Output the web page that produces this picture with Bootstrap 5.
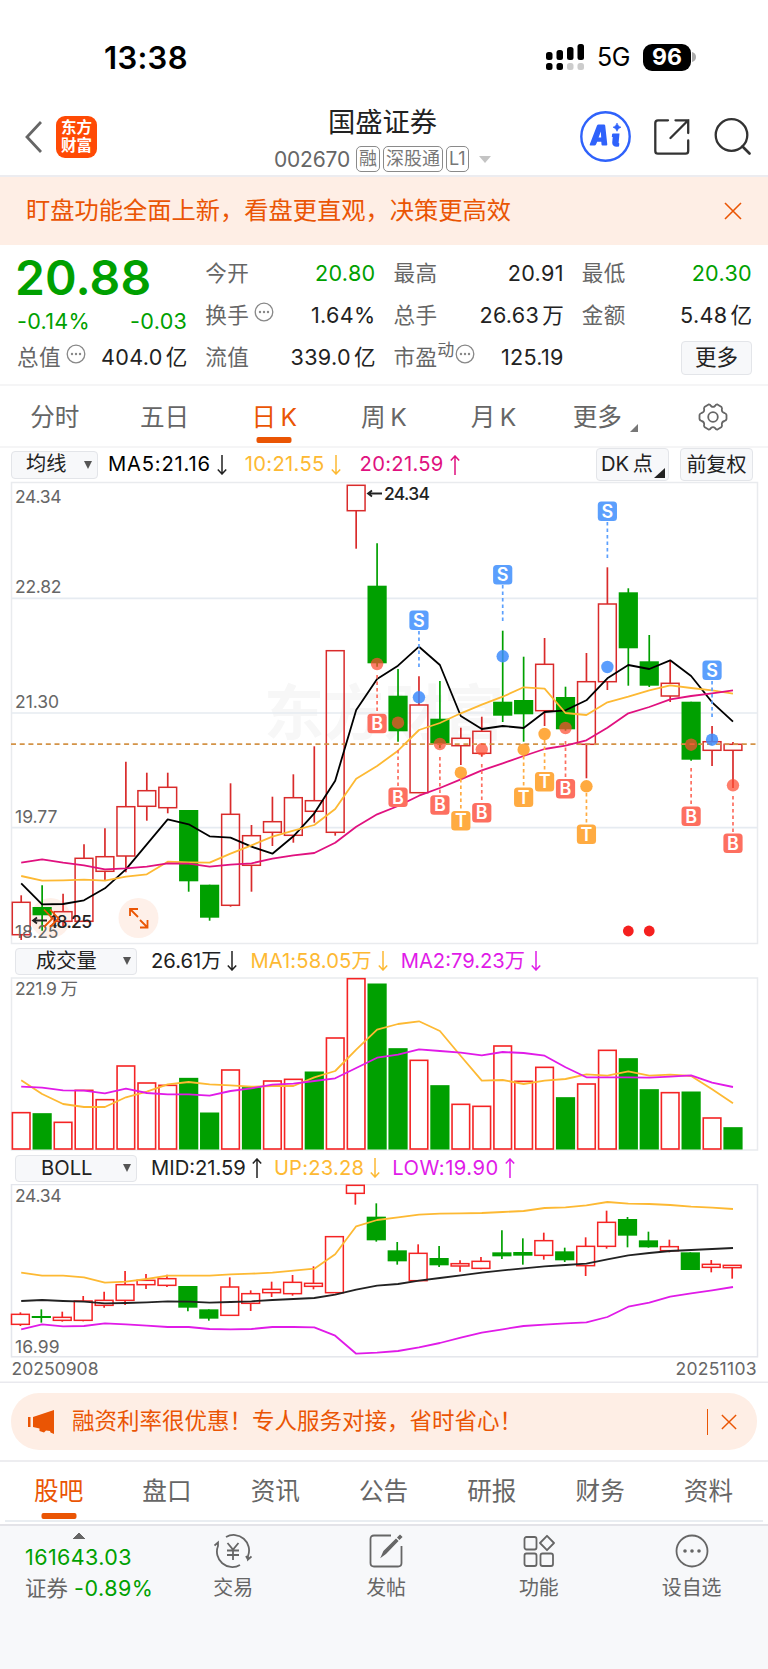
<!DOCTYPE html>
<html lang="zh-CN">
<head>
<meta charset="utf-8">
<meta name="viewport" content="width=device-width, initial-scale=1">
<title>国盛证券 002670</title>
<link href="https://cdn.jsdelivr.net/npm/bootstrap@5.3.0/dist/css/bootstrap.min.css" rel="stylesheet">
<style>
:root{--up:#e23030;--down:#00a000;--brand:#ea5504;--ink:#222;--muted:#666;--peach:#feeee5;--gold:#fdb933;--pink:#e0117f;--violet:#e01be8}
body{font-family:Inter,"Noto Sans CJK SC",sans-serif;color:var(--ink);width:768px;line-height:1;background:#fff;overflow-x:hidden}
svg{display:block;flex:none}
.text-down{color:var(--down)}.text-brand{color:var(--brand)}.text-dim{color:var(--muted)}
.text-gold{color:var(--gold)}.text-pink{color:var(--pink)}.text-violet{color:var(--violet)}
.statusbar{height:100px;padding:14px 72px 0 104px}
.clock{font-size:31px;font-weight:600;color:#000;letter-spacing:.3px}
.net{font-size:25px;color:#000;letter-spacing:-.4px}
.battery{width:48px;height:27px;border-radius:9px;background:#000;color:#fff;font-size:23px;font-weight:700}
.topbar{height:77px;border-bottom:2px solid #ececf0;padding:0 17px 2px 25px}
.applogo{width:41px;height:42px;border-radius:9px;background:#ff4a05;color:#fff;font-size:15.5px;font-weight:600;line-height:17.5px;margin-left:14px}
.titlebox{left:274px;top:109px;width:217px}
.stockname{font-size:27.3px;height:30px;text-align:center}
.code{font-size:21px;letter-spacing:-.2px;width:82px}
.tagbox{border:1.5px solid #8a8a8a;border-radius:5px;height:26px;font-size:18px;color:#777;margin-right:3px;padding:0 2px}
.notice{height:68px;background:var(--peach);color:var(--brand);font-size:24.25px;padding:0 26px}
.quote{height:141px;padding:8px 16px 0 17px;border-bottom:2px solid #f5f5f6}
.quotegrid{grid-template-columns:repeat(4,1fr);grid-auto-rows:42px;column-gap:18px;font-size:21.6px;letter-spacing:.3px}
.quotegrid .unit{margin-left:3px;letter-spacing:0}
.lastprice{font-size:48px;font-weight:600;letter-spacing:.1px;padding-top:1px;margin-left:-2px}
.sub1{padding-top:12px}
.sup{font-size:17px;align-self:flex-start;margin-top:5px}
.btnlite{background:#f7f8fa;border:1.5px solid #e3e5e9;border-radius:4px;color:var(--ink);line-height:1;padding:0}
.morebtn{width:71px;height:34px;font-size:21.5px}
.periods{height:62px;border-bottom:2px solid #f5f5f6;font-size:24.6px;color:var(--muted)}
.periods>div{height:62px;width:109.7px}
.bar35{width:35px;height:6px;border-radius:2px;background:var(--brand);bottom:5px;left:50%;transform:translateX(-50%)}
.legendrow{font-size:20.2px;white-space:nowrap}
.legendrow svg.arr{margin-left:6px}
.foot svg,.legendrow svg.arr{stroke:currentColor;fill:none}
.promo{height:57px;margin:10px 11px 10px;border-radius:28px;background:var(--peach);color:var(--brand);font-size:22.5px;padding:0 20px 0 17px}
.navtabs{height:60px;border-top:2px solid #ededf0;font-size:24.6px;color:var(--muted);padding:0}
.navtabs>div{width:108.3px;height:58px}
.navtabs .bar35{bottom:1px}
.foot{height:145px;background:#f7f8fa;border-top:2px solid #e3e3e8;color:var(--muted);font-size:19.9px}
.foot .item{width:153px;padding-top:8px}
.indexbox{width:157px;padding:7px 0 0 25px;font-size:21.5px}
</style>
</head>
<body>
<svg width="0" height="0" class="position-absolute"><defs>
<symbol id="dots" viewBox="0 0 20 20"><circle cx="10" cy="10" r="8.8" fill="none" stroke="#888" stroke-width="1.3"/><g fill="#888"><circle cx="6" cy="10" r="1.2"/><circle cx="10" cy="10" r="1.2"/><circle cx="14" cy="10" r="1.2"/></g></symbol>
<symbol id="dn" viewBox="0 0 10 20"><path d="M5 0V19M.8 14.5 5 19l4.200-4.500" stroke-width="1.500"/></symbol>
<symbol id="upa" viewBox="0 0 10 20"><path d="M5 20V1M.8 5.500 5 1l4.200 4.500" stroke-width="1.500"/></symbol>
<symbol id="cross" viewBox="0 0 18 18"><path d="M1 1 17 17M17 1 1 17" stroke="#ea5504" stroke-width="1.600"/></symbol>
</defs></svg>

<header>
<div class="statusbar d-flex align-items-center">
  <span class="clock me-auto">13:38</span>
  <svg width="39" height="28" viewBox="0 0 39 28" class="me-2 ms-auto"><g><rect x="0" y="9" width="6.500" height="8" rx="2.500"/><rect x="10.500" y="7" width="6.500" height="10" rx="2.500"/><rect x="21" y="4" width="6.500" height="13" rx="2.500"/><rect x="31.500" y="1" width="6.500" height="16" rx="2.500"/><rect x="0" y="20" width="6.500" height="7" rx="2.500"/><rect x="10.500" y="20" width="6.500" height="7" rx="2.500"/></g><g fill="#ccc"><rect x="21" y="20" width="6.500" height="7" rx="2.500"/><rect x="31.500" y="20" width="6.500" height="7" rx="2.500"/></g></svg>
  <span class="net" style="margin:0 13px 0 4px">5G</span>
  <span class="battery d-flex align-items-center justify-content-center">96</span><svg width="4" height="10" style="margin-left:1px"><path d="M0 0Q4 1 4 5T0 10Z" fill="#aaa"/></svg>
</div>
<div class="topbar d-flex align-items-center">
  <svg width="17" height="32" viewBox="0 0 17 32"><path d="M16 1 2 16 16 31" fill="none" stroke="#666" stroke-width="2.800"/></svg>
  <div class="applogo d-flex flex-column align-items-center justify-content-center"><span>东方</span><span>财富</span></div>
  <div class="titlebox position-absolute">
    <div class="stockname">国盛证券</div>
    <div class="d-flex align-items-center text-dim" style="margin-top:7px"><span class="code">002670</span><span class="tagbox d-flex align-items-center">融</span><span class="tagbox d-flex align-items-center">深股通</span><span class="tagbox d-flex align-items-center">L1</span><svg class="ms-auto" width="12" height="7"><path d="M0 0H12L6 7Z" fill="#c4c4c4"/></svg></div>
  </div>
  <svg class="ms-auto" width="51" height="51" viewBox="0 0 51 51"><circle cx="25.500" cy="25.500" r="24.200" fill="#fff" stroke="#2f62fb" stroke-width="2.400"/><path fill-rule="evenodd" d="M17 14.500Q17.500 13.500 18.500 13.500H24Q25 13.500 25.200 14.500L27.300 33.500Q27.300 34.500 26.300 34.500H22.500Q21.600 34.500 21.500 33.500L21.300 30.800H17.200L16 33.500Q15.500 34.500 14.500 34.500H10.500Q9.300 34.500 9.800 33.200ZM20.800 20.500 18.600 26.500H21.200Z" fill="#2f62fb"/><path d="M33 22.500H39.500L38.600 32Q39.500 32.200 39.300 33L39 35.500Q32 36.500 32.200 31.500L32.700 26H31.800L32.100 23.300Q32.200 22.500 33 22.500Z" fill="#2f62fb"/><path d="M37 12Q37.800 15.400 41 16.200 37.800 17 37 20.300 36.200 17 33 16.200 36.200 15.400 37 12Z" fill="#2f62fb" stroke="#2f62fb" stroke-width=".6"/></svg>
  <svg width="36" height="36" viewBox="0 0 36 36" style="margin-left:23px"><path d="M14 1.300H4Q1.300 1.300 1.300 4V32Q1.300 34.700 4 34.700H31.500Q34.200 34.700 34.200 32V21.500M21.500 1.300H34.200V14M34.200 1.300 16.500 19" fill="none" stroke="#333" stroke-width="2.300" stroke-linecap="round"/></svg>
  <svg width="37" height="37" viewBox="0 0 37 37" style="margin-left:24px"><circle cx="17.500" cy="17" r="15.800" fill="none" stroke="#333" stroke-width="2.300"/><path d="M28.500 28.500 35.500 35.500" stroke="#333" stroke-width="2.600" stroke-linecap="round"/></svg>
</div>
<div class="notice d-flex align-items-center justify-content-between"><span>盯盘功能全面上新，看盘更直观，决策更高效</span><svg width="18" height="18"><use href="#cross"/></svg></div>
</header>

<section class="quote">
<div class="quotegrid d-grid">
  <div class="lastprice text-down">20.88</div>
  <div class="d-flex justify-content-between align-items-center"><span class="text-dim">今开</span><span class="text-down">20.80</span></div>
  <div class="d-flex justify-content-between align-items-center"><span class="text-dim">最高</span><span>20.91</span></div>
  <div class="d-flex justify-content-between align-items-center"><span class="text-dim">最低</span><span class="text-down">20.30</span></div>
  <div class="d-flex justify-content-between align-items-center text-down sub1"><span>-0.14%</span><span>-0.03</span></div>
  <div class="d-flex align-items-center"><span class="text-dim">换手</span><svg class="mb-2" style="margin-left:5px" width="20" height="20"><use href="#dots"/></svg><span class="ms-auto">1.64%</span></div>
  <div class="d-flex justify-content-between align-items-center"><span class="text-dim">总手</span><span>26.63<span class="unit">万</span></span></div>
  <div class="d-flex justify-content-between align-items-center"><span class="text-dim">金额</span><span>5.48<span class="unit">亿</span></span></div>
  <div class="d-flex align-items-center"><span class="text-dim">总值</span><svg class="mb-2" style="margin-left:5px" width="20" height="20"><use href="#dots"/></svg><span class="ms-auto">404.0<span class="unit">亿</span></span></div>
  <div class="d-flex justify-content-between align-items-center"><span class="text-dim">流值</span><span>339.0<span class="unit">亿</span></span></div>
  <div class="d-flex align-items-center"><span class="text-dim">市盈</span><span class="sup text-dim">动</span><svg class="mb-2" width="20" height="20"><use href="#dots"/></svg><span class="ms-auto">125.19</span></div>
  <div class="d-flex justify-content-end align-items-center"><button class="btnlite morebtn">更多</button></div>
</div>
</section>

<nav class="periods d-flex">
  <div class="d-flex align-items-center justify-content-center">分时</div>
  <div class="d-flex align-items-center justify-content-center">五日</div>
  <div class="d-flex align-items-center justify-content-center position-relative text-brand">日&thinsp;K<i class="bar35 position-absolute"></i></div>
  <div class="d-flex align-items-center justify-content-center">周&thinsp;K</div>
  <div class="d-flex align-items-center justify-content-center">月&thinsp;K</div>
  <div class="d-flex align-items-center justify-content-center ps-1">更多<svg style="margin:22px 0 0 8px" width="8" height="8"><path d="M8 0V8H0Z" fill="#777"/></svg></div>
  <div class="d-flex align-items-center justify-content-center"><svg width="30" height="28" viewBox="0 0 30 28"><path d="M10.500 1.500Q12 1.200 13 3 15 4.800 17 3 18 1.200 19.500 1.500L23.500 4Q24.400 5 23.800 7 24 9.500 26.500 10 28.200 10.500 28.500 12V16Q28.200 17.500 26.500 18 24 18.500 23.800 21 24.400 23 23.500 24L19.500 26.500Q18 26.800 17 25 15 23.200 13 25 12 26.800 10.500 26.500L6.500 24Q5.600 23 6.200 21 6 18.500 3.500 18 1.800 17.500 1.500 16V12Q1.800 10.500 3.500 10 6 9.500 6.200 7 5.600 5 6.500 4Z" fill="none" stroke="#666" stroke-width="1.800"/><circle cx="15" cy="14" r="4.800" fill="none" stroke="#666" stroke-width="1.800"/></svg></div>
</nav>

<main>
<div class="legendrow d-flex align-items-center" style="height:33px;padding:0 15px 0 11px">
  <button class="btnlite d-flex align-items-center justify-content-between" style="width:87px;height:28px;padding:0 5px 0 14px">均线<svg width="8" height="8"><path d="M0 0H8L4 8Z" fill="#555"/></svg></button>
  <span style="margin-left:10px;color:#000;letter-spacing:.8px">MA5:21.16</span><svg class="arr" width="10" height="20"><use href="#dn"/></svg>
  <span class="text-gold" style="margin-left:18px;letter-spacing:.3px">10:21.55</span><svg class="arr text-gold" width="10" height="20"><use href="#dn"/></svg>
  <span class="text-pink" style="margin-left:19px;letter-spacing:.3px">20:21.59</span><svg class="arr text-pink" width="10" height="20"><use href="#upa"/></svg>
  <button class="btnlite ms-auto d-flex align-items-center position-relative" style="width:73px;height:33px;padding-left:4px">DK&thinsp;点<svg class="position-absolute" style="right:3px;bottom:2px" width="11" height="10"><path d="M11 0V10H0Z" fill="#222"/></svg></button>
  <button class="btnlite" style="width:73px;height:33px;margin-left:11px;font-size:20px">前复权</button>
</div>
<svg id="kline" width="768" height="464" viewBox="0 481 768 464"></svg>
<div class="legendrow d-flex align-items-center" style="height:32px;padding:0 15px">
  <button class="btnlite d-flex align-items-center justify-content-between" style="width:122px;height:27px;padding:0 5px 0 20px">成交量<svg width="8" height="8"><path d="M0 0H8L4 8Z" fill="#555"/></svg></button>
  <span style="margin-left:14px">26.61万</span><svg class="arr" width="10" height="20"><use href="#dn"/></svg>
  <span class="text-gold" style="margin-left:13px;letter-spacing:.1px">MA1:58.05万</span><svg class="arr text-gold" width="10" height="20"><use href="#dn"/></svg>
  <span class="text-violet" style="margin-left:13px">MA2:79.23万</span><svg class="arr text-violet" width="10" height="20"><use href="#dn"/></svg>
</div>
<svg id="volume" width="768" height="175" viewBox="0 977 768 175"></svg>
<div class="legendrow d-flex align-items-center" style="height:32px;padding:0 15px">
  <button class="btnlite d-flex align-items-center justify-content-between" style="width:122px;height:27px;padding:0 5px 0 25px">BOLL<svg width="8" height="8"><path d="M0 0H8L4 8Z" fill="#555"/></svg></button>
  <span style="margin-left:14px">MID:21.59</span><svg class="arr" width="10" height="20"><use href="#upa"/></svg>
  <span class="text-gold" style="margin-left:12px;letter-spacing:.2px">UP:23.28</span><svg class="arr text-gold" width="10" height="20"><use href="#dn"/></svg>
  <span class="text-violet" style="margin-left:12px;letter-spacing:.5px">LOW:19.90</span><svg class="arr text-violet" width="10" height="20"><use href="#upa"/></svg>
</div>
<svg id="boll" width="768" height="199" viewBox="0 1184 768 199"></svg>
</main>

<div class="promo d-flex align-items-center">
  <svg width="27" height="24" viewBox="0 0 27 24"><path d="M0 7h2.500v10H0zM5 7 26 0V24L22.500 22.500 22 21 18 20.500 16 22.500 11.500 21V18.500L5 17Z" fill="#ea5504"/></svg>
  <span style="margin-left:17px">融资利率很优惠！专人服务对接，省时省心！</span>
  <span class="ms-auto" style="width:1.500px;height:26px;background:#ea5504;margin-right:13px"></span><svg width="16" height="16"><use href="#cross"/></svg>
</div>
<nav class="navtabs d-flex" style="padding-left:4.500px">
  <div class="d-flex align-items-center justify-content-center position-relative text-brand">股吧<i class="bar35 position-absolute"></i></div>
  <div class="d-flex align-items-center justify-content-center">盘口</div><div class="d-flex align-items-center justify-content-center">资讯</div><div class="d-flex align-items-center justify-content-center">公告</div><div class="d-flex align-items-center justify-content-center">研报</div><div class="d-flex align-items-center justify-content-center">财务</div><div class="d-flex align-items-center justify-content-center">资料</div>
</nav>
<div style="height:4px;margin:0 5px;border-top:2px solid #e9edf1"></div>
<footer class="foot d-flex">
  <div class="indexbox"><svg width="12" height="6" style="margin-left:48px"><path d="M0 6H12L6 0Z" fill="#666"/></svg><div class="text-down" style="margin-top:8px;letter-spacing:.4px">161643.03</div><div style="margin-top:9px;white-space:nowrap">证券<span class="text-down" style="margin-left:6px;letter-spacing:.5px">-0.89%</span></div></div>
  <div class="item d-flex flex-column align-items-center"><svg width="38" height="34" viewBox="0 0 38 34"><g stroke-width="1.800"><path d="M12 3A15.400 15.400 0 0 1 34 22V25.500L37.500 22.500M34 25.500 32 22M26 31A15.400 15.400 0 0 1 4 12V8.500L.5 11.500"/><path d="M13.500 9 19 15.500 24.500 9M19 15.500V26M13 16.500H25M13 21H25"/></g></svg><span style="margin-top:11px">交易</span></div>
  <div class="item d-flex flex-column align-items-center"><svg width="34" height="34" viewBox="0 0 34 34"><path d="M22 1.500H5Q1.500 1.500 1.500 5V29Q1.500 32.500 5 32.500H29Q32.500 32.500 32.500 29V12" stroke-width="1.800"/><path d="M13 22 15 17.500 27 5.500 28.500 7 16.500 19.500ZM29 3.500 31 1.500 32.500 3 30.500 5Z" stroke-width="1.500" fill="#666"/></svg><span style="margin-top:11px">发帖</span></div>
  <div class="item d-flex flex-column align-items-center"><svg width="32" height="34" viewBox="0 0 32 34"><g stroke-width="1.800"><rect x="1.500" y="3" width="12" height="12.500" rx="2"/><rect x="1.500" y="19.500" width="12" height="12.500" rx="2"/><rect x="17.500" y="19.500" width="12.500" height="12.500" rx="2"/><path d="M24 1.800 31 9 24 16.200 17 9Z" stroke-linejoin="round"/></g></svg><span style="margin-top:11px">功能</span></div>
  <div class="item d-flex flex-column align-items-center"><svg width="34" height="34" viewBox="0 0 34 34"><circle cx="17" cy="17" r="15.500" stroke-width="1.800"/><g fill="#666" stroke="none"><circle cx="10" cy="17" r="1.800"/><circle cx="17" cy="17" r="1.800"/><circle cx="24" cy="17" r="1.800"/></g></svg><span style="margin-top:11px">设自选</span></div>
</footer>

<script>
const X = i => 21.2 + i * 20.935;
const COL = {up:'#d92b2b', down:'#00a000', gold:'#fdb933', pink:'#e0117f', violet:'#e01be8'};
const rect = (x,y,w,h,a) => `<rect x="${x}" y="${y}" width="${w}" height="${h}" ${a}/>`;
const line = (x1,y1,x2,y2,a) => `<line x1="${x1}" y1="${y1}" x2="${x2}" y2="${y2}" ${a}/>`;
const label = (x,y,s,w,a='fill="#666"') => `<text x="${x}" y="${y}" font-size="17.5" textLength="${w}" ${a}>${s}</text>`;
const poly = (ys,c,f=v=>v,w=1.8) => `<polyline fill="none" stroke="${c}" stroke-width="${w}" stroke-linejoin="round" points="${ys.map((v,i)=>X(i).toFixed(1)+','+f(v).toFixed(1)).join(' ')}"/>`;
// one candle: [isUp, bodyTop, bodyBottom, high, low]
function candle(x,[up,t,b,h,l],f,red){
  t=f(t);b=f(b);h=f(h);l=f(l);
  if(up) return line(x,h,x,t,`stroke="${red}" stroke-width="1.700"`)+line(x,b,x,l,`stroke="${red}" stroke-width="1.700"`)+rect(x-8.9,t,17.8,b-t,`fill="none" stroke="${red}" stroke-width="1.500"`);
  return line(x,h,x,l,`stroke="${COL.down}" stroke-width="1.700"`)+rect(x-9.6,t,19.2,b-t,`fill="${COL.down}"`);
}
const K=[[1,902.3,934.7,895.3,940],[0,907,915.3,885.3,930.7],[1,911.7,921.3,893.7,926],[1,858.3,921.3,844.3,921.3],[1,856.7,871.3,828.3,880.3],[1,806.7,856,761.7,872.3],[1,790.7,806.3,772.7,820.7],[1,787.3,807.7,772.7,813.3],[0,810,881.3,810,891.7],[0,884.7,917.7,884.7,920.7],[1,814.3,905.3,783.3,906.7],[1,835.7,865.3,825,891.7],[1,821.7,832.3,796.7,846],[1,797.7,835.3,774.3,842.7],[1,800.7,811.3,746.3,822.7],[1,650.7,832.3,650.7,835.7],[1,485.3,510.7,485.3,548.7],[0,585.7,663.3,543.3,666.7],[0,695.7,731.3,669,741.7],[1,705,792.7,676.3,792.7],[0,718.7,743.7,681,748],[1,738.3,745.7,727.7,765],[1,731.3,753.3,716.7,756.7],[0,701.7,715.7,630.7,722],[0,700,714.3,656.7,741.7],[1,664.3,710.7,638,726],[0,697,729.3,686.7,730.7],[1,681.7,744.3,653,778.3],[1,604,681.7,567.3,690],[0,592.3,648.3,588.3,685.7],[0,661.3,685.7,635,687],[1,683.3,696,660,702],[0,701.7,759.7,701.7,760.7],[1,741.7,750.3,726,766],[1,744.3,750.3,742,788]];
const MA5=[883.3,904.3,904,900.3,888.3,869.3,844.3,819.3,824.3,836.3,837.7,846.7,853.7,836.3,813.3,780.7,710,679,665.7,646.7,665,716,729,726,728,712,710.3,700.3,678.3,665,669,660.3,676,702.3,721.7];
const MA10=[876,880.7,880.3,879.7,880.7,876.7,874.3,861.7,862.3,862.7,853.7,845.3,836.7,830.7,825,809,778.7,766,750.7,730,723,713.3,704.7,696.7,687.3,688.7,713,715,702.3,696.7,690.3,685.3,688,690.3,693.7];
const MA20=[862.7,859.3,862.7,865.3,869.3,868.3,866.7,863.3,863.7,866.7,864.7,863.3,858.7,855.3,853,842.7,826.7,814.3,806,795.7,788,779.3,770.3,763.3,756,749,745.7,740.3,727.7,713.3,707,699.3,696,693.3,690.3];
// signal markers: [index, letter, dot y, box centre y, dash start, dash end]
const SIG=[[17,'B',664,723.5,675,713],[18,'B',722.7,797.3,750,788],[20,'B',744,805,757,795],[21,'T',772.7,820.7,779,811],[22,'B',749.3,812.7,764,803],[24,'T',749.7,797.3,756,788],[25,'T',734,781.7,740,772],[26,'B',728,788.7,741,779],[27,'T',786.3,834.3,793,825],[32,'B',744.7,816.3,768,807],[34,'B',785.3,843.3,796,834],[19,'S',697.3,620.3,631,670],[23,'S',656.3,574.7,585,624],[28,'S',667,511.3,522,560],[33,'S',739.7,670.3,681,719]];
const SC={B:'#fd6f60',T:'#ffab41',S:'#5b9ffd'}, DC={B:'rgba(253,76,50,.72)',T:'rgba(255,155,30,.85)',S:'rgba(61,140,253,.85)'};
const id=v=>v;
let s='';
s+=`<text x="264" y="735" font-size="60" font-weight="700" fill="#f7f7f7" textLength="240">东方财富</text>`;
s+=`<circle cx="50.500" cy="918" r="20" fill="#fef0e9"/><circle cx="138.500" cy="918" r="20" fill="#fef0e9"/>`;
s+=rect(11.5,482.5,746,461,'fill="none" stroke="#e9ebee" stroke-width="1.500"');
[598.3,713,827.7].forEach(y=>s+=line(11,y,757,y,'stroke="#e6ebf1" stroke-width="1.700"'));
K.forEach((k,i)=>s+=candle(X(i),k,id,COL.up));
s+=line(11,744.2,757,744.2,'stroke="#d39347" stroke-width="1.700" stroke-dasharray="5 3.700"');
s+=poly(MA5,'#000')+poly(MA10,COL.gold)+poly(MA20,COL.pink);
SIG.forEach(([i,c,d,b,a,e])=>{const x=X(i);
 s+=line(x,a,x,e,`stroke="${SC[c]}" stroke-width="1.700" stroke-dasharray="3.500 3"`)+`<circle cx="${x}" cy="${d}" r="6.200" fill="${DC[c]}"/>`+rect(x-9.6,b-9.8,19.2,19.6,`rx="3.500" fill="${SC[c]}"`)+`<text x="${x}" y="${b+6.4}" font-size="18" font-weight="600" fill="#fff" text-anchor="middle">${c}</text>`;});
[29,30].forEach(i=>s+=`<circle cx="${X(i)}" cy="931" r="5.400" fill="#f5201f"/>`);
[['24.34',502.5,46.5],['22.82',592.7,46.5],['21.30',707.7,44],['19.77',823,42.5],['18.25',938,43.5]].forEach(([t,y,w])=>s+=label(15,y,t,w));
const arrow=(x,y)=>`<path d="M${x+15} ${y}H${x+2}M${x+5} ${y-3}L${x+1} ${y}L${x+5} ${y+3}" fill="none" stroke="#222" stroke-width="1.800"/>`;
s+=arrow(367,493.5)+label(384,500,'24.34',46,'fill="#222" font-weight="500"');
s+=arrow(32,920.5);
s+=label(50,927.5,'18.25',42,'fill="#222" font-weight="500"');
s+=`<g fill="none" stroke="#ea5504" stroke-width="1.800"><path d="M44 909.500 52.500 918.500 44 927M50 909.500 58.500 918.500 50 927"/><path d="M138 917 130 909M130 916V909H138M140 920 147.500 927.500M147.500 920V927.500H140"/></g>`;
kline.innerHTML=s;

// volume pane
const fv=v=>940+v/3;
const V=[[1,518],[0,521],[1,547],[1,451],[1,479],[1,378],[1,429],[1,436],[0,415],[0,519],[1,390],[0,443],[1,423],[1,418],[0,396],[1,294],[1,116],[0,132],[0,326],[1,361],[0,437],[1,493],[1,499],[1,318],[1,424],[1,382],[0,473],[1,432],[1,331],[0,356],[0,449],[1,458],[0,456],[1,534],[0,563]];
const VM1=[421,462,492,501,501,472,455,433,426,433,436,440,438,438,412,393,329,269,252,244,273,348,422,420,432,422,417,403,407,394,407,404,408,448,490];
const VM2=[440,443,451,452,460,446,459,463,463,467,453,445,434,431,423,415,384,353,344,328,333,338,346,336,339,347,382,412,412,412,413,410,406,428,441];
s=rect(11.5,978,746,172,'fill="none" stroke="#e9ebee" stroke-width="1.500"');
V.forEach(([u,t],i)=>{const x=X(i),y=fv(t);s+=u?rect(x-8.8,y,17.6,1149-y,'fill="none" stroke="#f42424" stroke-width="1.600"'):rect(x-9.6,y-.5,19.2,1150-y,'fill="#00a000"')});
s+=poly(VM1,COL.gold,fv)+poly(VM2,COL.violet,fv)+label(15,995,'221.9 万',63);
volume.innerHTML=s;

// bollinger pane
const fb=v=>1160+v/3;
const B=[[1,463,493,457,498],[0,468,474,448,488],[1,472,481,455,485],[1,423,481,408,484],[1,421,436,395,443],[1,374,421,333,435],[1,361,374,342,387],[1,356,376,344,381],[0,378,443,378,454],[0,448,476,448,482],[1,381,466,352,466],[1,401,430,391,453],[1,388,398,365,411],[1,367,401,345,407],[1,370,379,319,388],[1,230,398,230,398],[1,76,100,76,134],[0,170,241,130,245],[0,271,304,246,314],[1,280,362,253,362],[0,294,316,258,321],[1,311,318,301,335],[1,304,325,291,328],[0,277,289,211,297],[0,276,287,235,314],[1,242,286,218,299],[0,274,301,263,306],[1,259,317,232,348],[1,187,259,152,266],[0,177,227,171,262],[0,241,262,215,263],[1,260,272,239,277],[0,277,330,277,330],[1,313,322,300,337],[1,316,323,316,356]];
const BU=[338,347,347,352,368,365,357,347,347,347,343,341,338,332,326,283,199,180,172,164,161,160,159,156,153,144,142,136,126,131,132,135,140,143,147];
const BM=[423,420,423,425,430,429,427,424,425,428,426,424,420,417,414,404,389,377,372,362,354,346,338,331,325,319,315,311,298,286,279,273,270,267,264];
const BL=[508,493,499,498,490,493,497,501,501,507,508,507,501,501,502,527,581,578,573,562,549,533,518,508,498,494,490,487,471,440,428,410,400,391,381];
s=rect(11.5,1184.500,746,172.300,'fill="none" stroke="#e4e6ec" stroke-width="1.500"');
B.forEach((k,i)=>s+=candle(X(i)-.8,k,fb,'#f42424'));
s+=poly(BM,'#222',fb)+poly(BU,COL.gold,fb)+poly(BL,COL.violet,fb);
s+=label(15,1202,'24.34',46.5)+label(15,1353,'16.99',44.5)+label(11.500,1374.500,'20250908',87)+label(675.500,1374.500,'20251103',81);
s+=line(0,1382.300,768,1382.300,'stroke="#e9e9ee" stroke-width="1.500"');
boll.innerHTML=s;
</script>
<script src="https://cdn.jsdelivr.net/npm/bootstrap@5.3.0/dist/js/bootstrap.bundle.min.js"></script>
</body>
</html>
